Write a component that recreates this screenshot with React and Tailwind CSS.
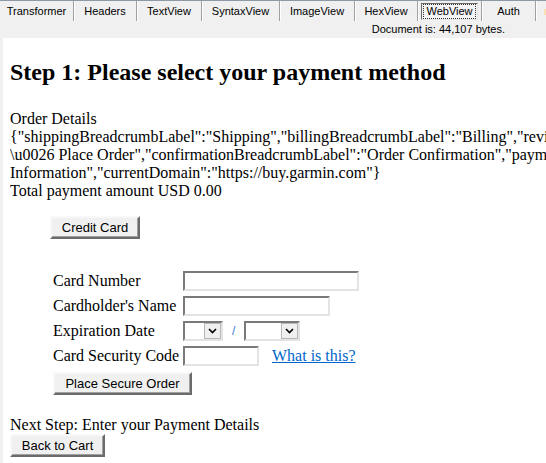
const TABS = [
  { label: 'Transformer', w: 'w-[74px]' },
  { label: 'Headers', w: 'w-[63px]' },
  { label: 'TextView', w: 'w-[65px]' },
  { label: 'SyntaxView', w: 'w-[78px]' },
  { label: 'ImageView', w: 'w-[75px]' },
  { label: 'HexView', w: 'w-[63px]' },
  { label: 'WebView', w: 'w-[64px]', active: true },
  { label: 'Auth', w: 'w-[54px]' },
]

function Tab({ tab }) {
  return (
    <div className={`${tab.w} h-[20px] shrink-0 flex items-center justify-center border-r border-r-[#a0a0a0] shadow-[1px_0_0_#ffffff]`}>
      {tab.active ? (
        <div className="h-[17px] px-[2px] flex items-center border border-t-[#696969] border-l-[#696969] border-r-[#e3e3e3] border-b-[#e3e3e3] bg-[#f4f4f4]">
          <span className="px-[2px] leading-[13px] outline-1 outline-dotted outline-[#333]">{tab.label}</span>
        </div>
      ) : (
        <span>{tab.label}</span>
      )}
    </div>
  )
}

function Btn({ children, className = '' }) {
  return (
    <button className={`h-[23px] px-[8px] bg-[#f0f0f0] text-[13px] text-black border-2 border-t-[#f8f8f8] border-l-[#f8f8f8] border-r-[#6b6b6b] border-b-[#6b6b6b] shadow-[inset_-1px_-1px_0_#a0a0a0] font-['Liberation_Sans',Arial,sans-serif] ${className}`}>
      {children}
    </button>
  )
}

function TextBox({ w }) {
  return (
    <div className={`${w} h-[20px] bg-white border-2 border-t-[#7a7a7a] border-l-[#7a7a7a] border-r-[#e3e3e3] border-b-[#e3e3e3]`} />
  )
}

function Select({ w }) {
  return (
    <div className={`${w} h-[20px] flex bg-white border-2 border-t-[#7a7a7a] border-l-[#7a7a7a] border-r-[#e3e3e3] border-b-[#e3e3e3]`}>
      <div className="flex-1" />
      <div className="w-[17px] h-full bg-[#f0f0f0] border border-[#b8b8b8] flex items-center justify-center">
        <svg width="9" height="6" viewBox="0 0 9 6">
          <path d="M1 1 L4.5 4.5 L8 1" fill="none" stroke="#000" strokeWidth="1.6" />
        </svg>
      </div>
    </div>
  )
}

const rowLabel = 'w-[130px] shrink-0'

export default function App() {
  return (
    <div className="w-[546px] h-[463px] overflow-hidden bg-[#f0f0f0] font-['Liberation_Sans',Arial,sans-serif] text-[11px] text-black">
      {/* tab strip */}
      <div className="h-[38px] border-t border-t-[#8c9aa8]">
        <div className="flex">
          {TABS.map(t => (
            <Tab key={t.label} tab={t} />
          ))}
          <div className="ml-[8px] mt-[8px] w-[3px] h-[6px] bg-[#fbe0b4]" />
        </div>
        <div className="text-right pr-[41px] leading-[14px] mt-[1px]">Document is: 44,107 bytes.</div>
      </div>

      {/* web view */}
      <div className="ml-[3px] h-[425px] bg-white pl-[7px] font-['Liberation_Serif','Times_New_Roman',serif] text-[16px] leading-[18px] overflow-hidden">
        <h1 className="mt-[20px] text-[24px] leading-[28px] font-bold whitespace-nowrap">
          Step 1: Please select your payment method
        </h1>

        <div className="mt-[24px] whitespace-nowrap overflow-hidden">
          <div>Order Details</div>
          <div>{'{"shippingBreadcrumbLabel":"Shipping","billingBreadcrumbLabel":"Billing","reviewBreadcrumbLabel":"Review'}</div>
          <div>{'\\u0026 Place Order","confirmationBreadcrumbLabel":"Order Confirmation","paymentBreadcrumbLabel":"Payment'}</div>
          <div>{'Information","currentDomain":"https://buy.garmin.com"}'}</div>
          <div>Total payment amount USD 0.00</div>
        </div>

        <div className="mt-[16px] ml-[40px]">
          <Btn className="w-[90px]">Credit Card</Btn>
        </div>

        <div className="mt-[32px] ml-[43px] flex flex-col gap-[5px]">
          <div className="flex items-center h-[20px]">
            <span className={rowLabel}>Card Number</span>
            <TextBox w="w-[176px]" />
          </div>
          <div className="flex items-center h-[20px]">
            <span className={rowLabel}>Cardholder's Name</span>
            <TextBox w="w-[147px]" />
          </div>
          <div className="flex items-center h-[20px]">
            <span className={rowLabel}>Expiration Date</span>
            <Select w="w-[40px]" />
            <span className="mx-[9px] text-[#3a7bd5] font-['Liberation_Sans',Arial,sans-serif] text-[12px]">/</span>
            <Select w="w-[56px]" />
          </div>
          <div className="flex items-center h-[20px]">
            <span className={rowLabel}>Card Security Code</span>
            <TextBox w="w-[76px]" />
            <a href="#" className="ml-[13px] text-[#0066cc] underline">What is this?</a>
          </div>
          <div className="mt-[1px]">
            <Btn className="w-[139px]">Place Secure Order</Btn>
          </div>
        </div>

        <div className="mt-[21px] whitespace-nowrap">Next Step: Enter your Payment Details</div>
        <Btn className="w-[95px]">Back to Cart</Btn>
      </div>
    </div>
  )
}
